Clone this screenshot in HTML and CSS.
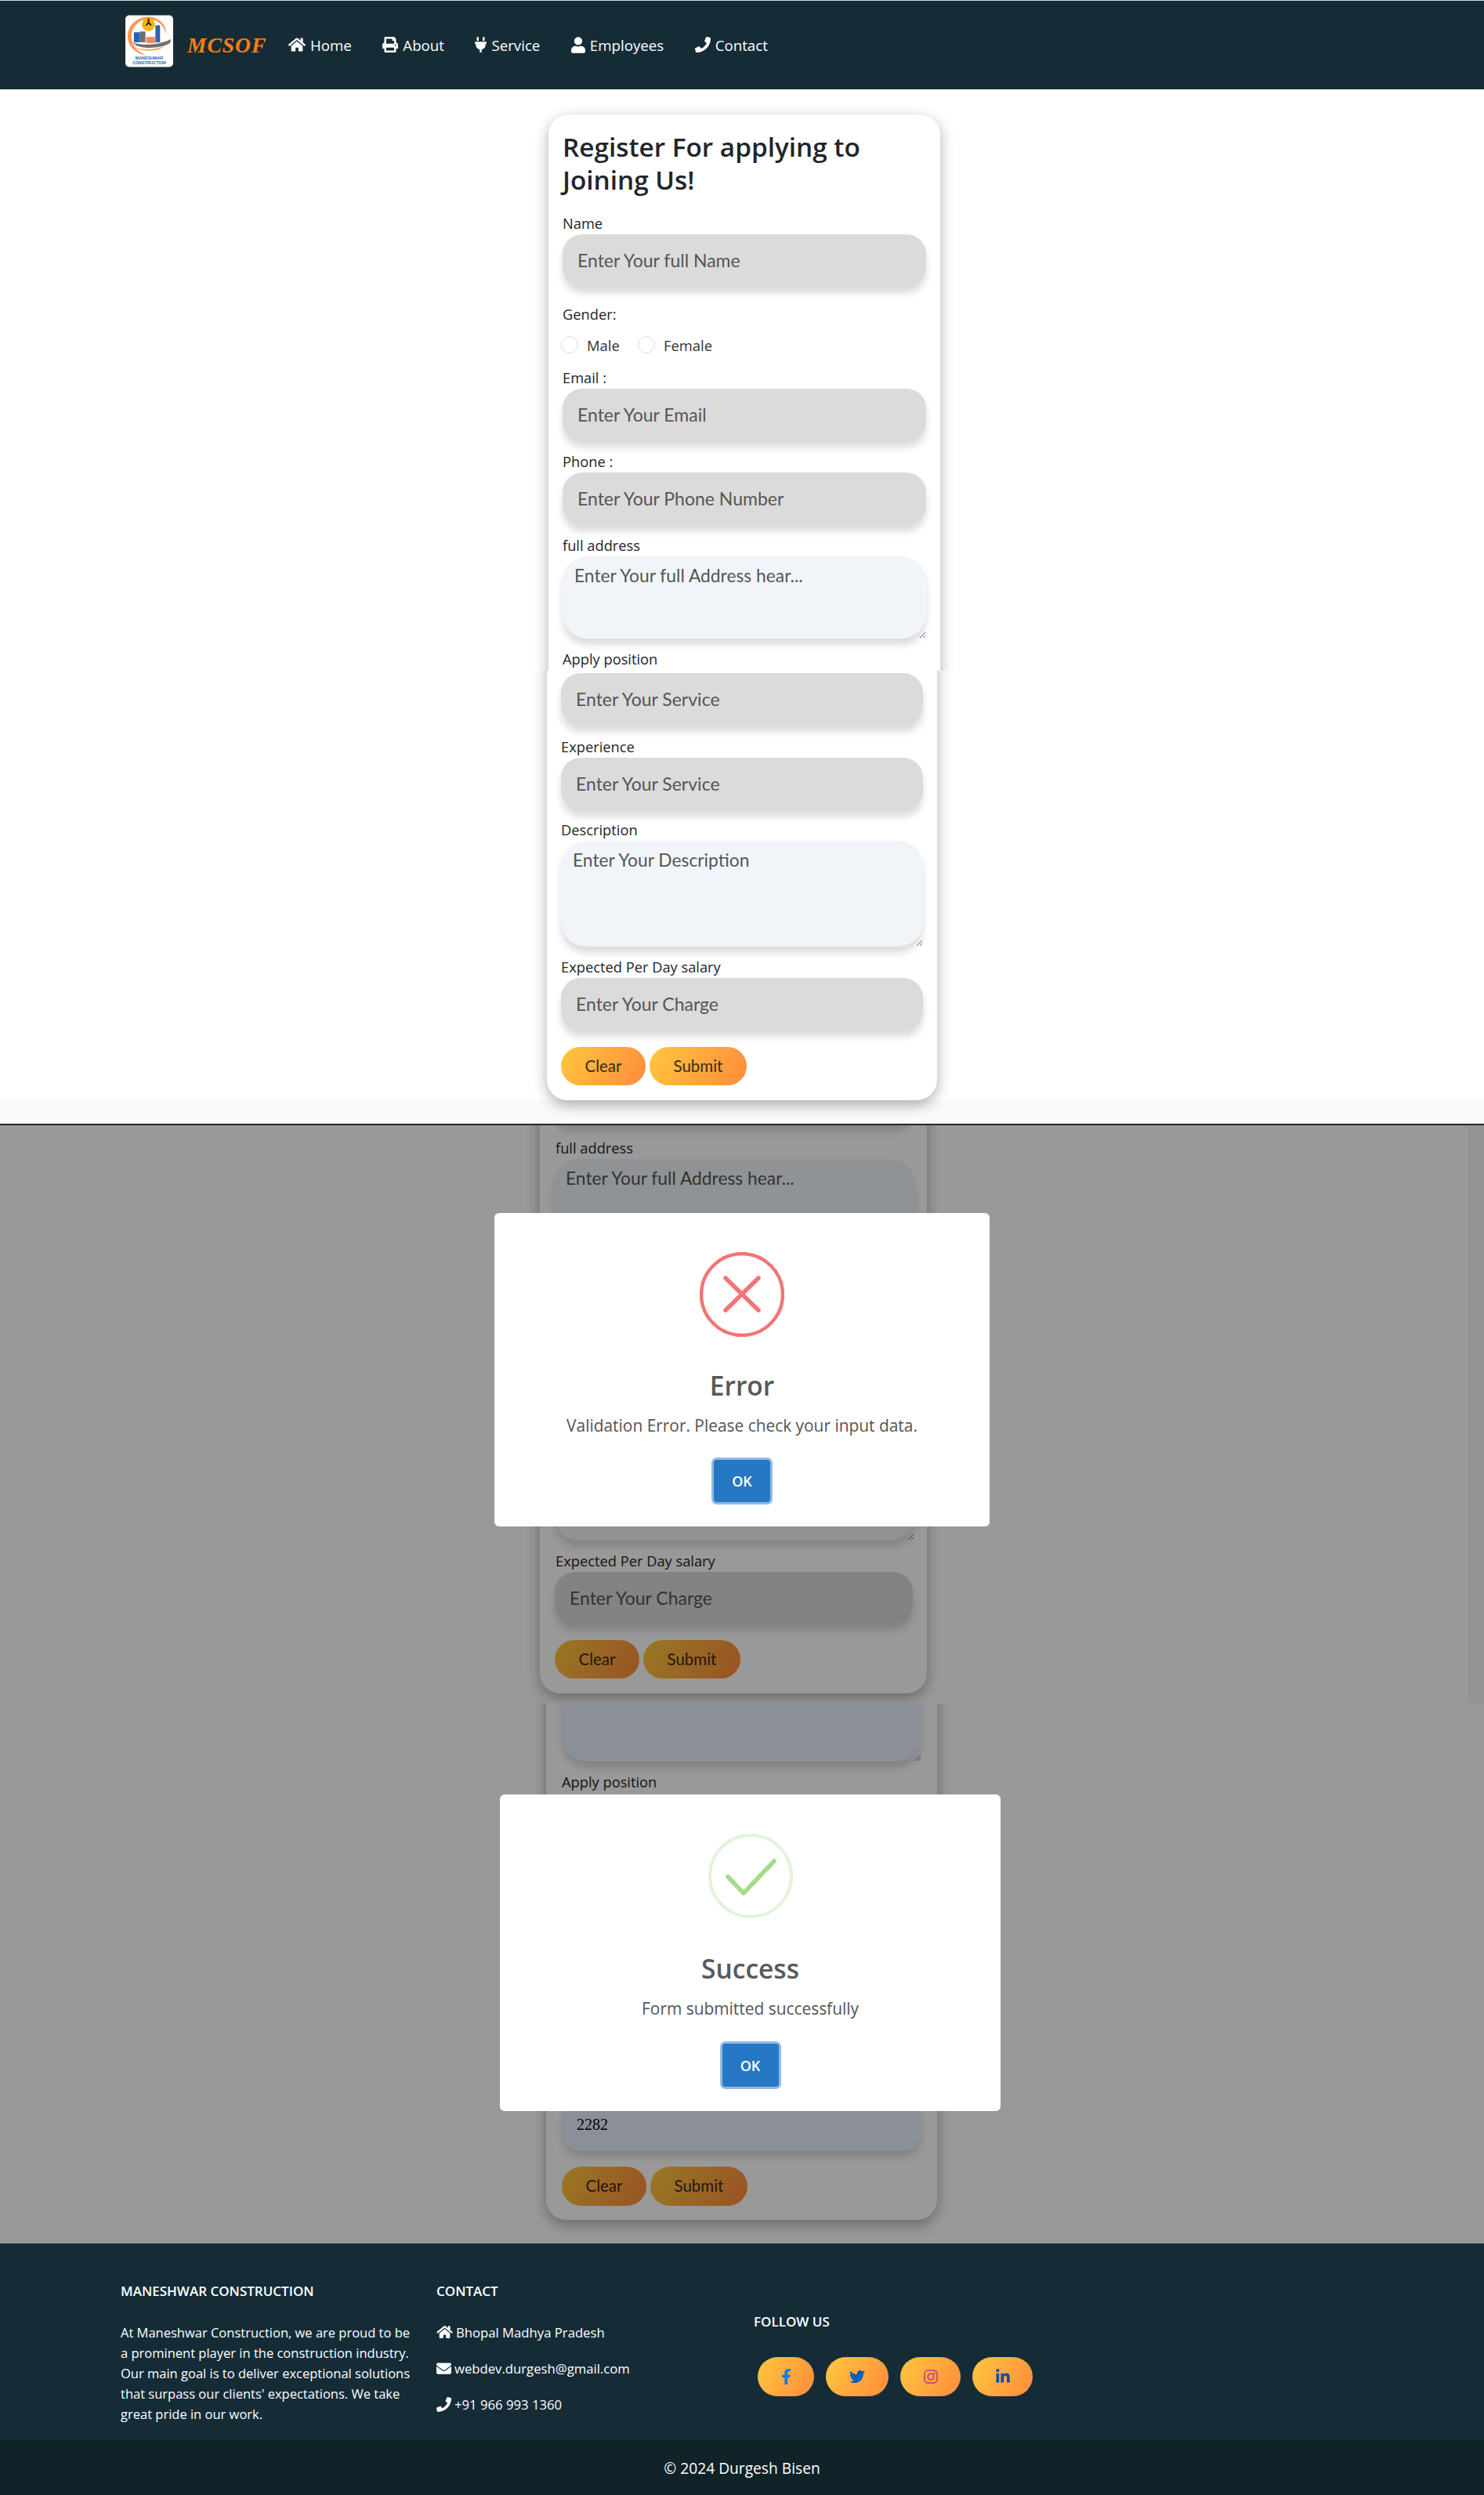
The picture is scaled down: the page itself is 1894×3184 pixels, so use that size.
FILE: index.html
```html
<!DOCTYPE html>
<html lang="en">
<head>
  <meta charset="UTF-8">
  <title>MCSOF - Register</title>
  <link rel="stylesheet" href="styles.css">
</head>
<body>
  <svg class="icon-defs" xmlns="http://www.w3.org/2000/svg">
    <symbol id="i-home" viewBox="0 0 576 512"><path d="M280.37 148.26L96 300.11V464a16 16 0 0 0 16 16l112.06-.29a16 16 0 0 0 15.92-16V368a16 16 0 0 1 16-16h64a16 16 0 0 1 16 16v95.64a16 16 0 0 0 16 16.05L464 480a16 16 0 0 0 16-16V300L295.67 148.26a12.19 12.19 0 0 0-15.3 0zM571.6 251.47L488 182.56V44.05a12 12 0 0 0-12-12h-56a12 12 0 0 0-12 12v72.61L318.47 43a48 48 0 0 0-61 0L4.34 251.47a12 12 0 0 0-1.6 16.9l25.5 31A12 12 0 0 0 45.15 301l235.22-193.74a12.19 12.19 0 0 1 15.3 0L530.9 301a12 12 0 0 0 16.9-1.6l25.5-31a12 12 0 0 0-1.7-16.93z"/></symbol>
    <symbol id="i-print" viewBox="0 0 512 512"><path d="M448 192V77.25c0-8.49-3.37-16.62-9.37-22.63L393.37 9.37c-6-6-14.14-9.37-22.63-9.37H96C78.33 0 64 14.33 64 32v160c-35.35 0-64 28.65-64 64v112c0 8.84 7.16 16 16 16h48v96c0 17.67 14.33 32 32 32h320c17.67 0 32-14.33 32-32v-96h48c8.84 0 16-7.16 16-16V256c0-35.35-28.65-64-64-64zm-64 256H128v-96h256v96zm0-224H128V64h192v48c0 8.84 7.16 16 16 16h48v96zm48 72c-13.25 0-24-10.75-24-24 0-13.26 10.75-24 24-24s24 10.74 24 24c0 13.25-10.75 24-24 24z"/></symbol>
    <symbol id="i-plug" viewBox="0 0 384 512"><path d="M320,32a32,32,0,0,0-64,0v96h64Zm48,128H16A16,16,0,0,0,0,176v32a16,16,0,0,0,16,16H32v32A160.07,160.07,0,0,0,160,412.8V512h64V412.8A160.07,160.07,0,0,0,352,256V224h16a16,16,0,0,0,16-16V176A16,16,0,0,0,368,160ZM128,32a32,32,0,0,0-64,0v96h64Z"/></symbol>
    <symbol id="i-user" viewBox="0 0 448 512"><path d="M224 256c70.7 0 128-57.3 128-128S294.7 0 224 0 96 57.3 96 128s57.3 128 128 128zm89.6 32h-16.7c-22.2 10.2-46.9 16-72.9 16s-50.6-5.8-72.9-16h-16.7C60.2 288 0 348.2 0 422.4V464c0 26.5 21.5 48 48 48h352c26.5 0 48-21.5 48-48v-41.6c0-74.2-60.2-134.4-134.4-134.4z"/></symbol>
    <symbol id="i-phone" viewBox="0 0 512 512"><path d="M493.4 24.6l-104-24c-11.3-2.6-22.9 3.3-27.5 13.9l-48 112c-4.2 9.8-1.4 21.3 6.9 28l60.6 49.6c-36 76.7-98.9 140.5-177.2 177.2l-49.6-60.6c-6.8-8.3-18.2-11.1-28-6.9l-112 48C3.9 366.5-2 378.1.6 389.4l24 104C27.1 504.2 36.7 512 48 512c256.1 0 464-207.5 464-464 0-11.2-7.7-20.9-18.6-23.4z"/></symbol>
    <symbol id="i-mail" viewBox="0 0 512 512"><path d="M502.3 190.8c3.9-3.1 9.7-.2 9.7 4.7V400c0 26.5-21.5 48-48 48H48c-26.5 0-48-21.5-48-48V195.6c0-5 5.7-7.8 9.7-4.7 22.4 17.4 52.1 39.5 154.1 113.6 21.1 15.4 56.7 47.8 92.2 47.6 35.7.3 72-32.8 92.3-47.6 102-74.1 131.6-96.3 154-113.7zM256 320c23.2.4 56.6-29.2 73.4-41.4 132.7-96.3 142.8-104.7 173.4-128.7 5.8-4.5 9.2-11.5 9.2-18.9v-19c0-26.5-21.5-48-48-48H48C21.5 64 0 85.5 0 112v19c0 7.4 3.4 14.3 9.2 18.9 30.6 23.9 40.7 32.4 173.4 128.7 16.8 12.2 50.2 41.8 73.4 41.4z"/></symbol>
  </svg>

  <header class="topbar">
    <svg class="logo" viewBox="0 0 62 67" xmlns="http://www.w3.org/2000/svg">
      <rect width="62" height="67" rx="5" fill="#fff"/>
      <path d="M30 2C15 2 3 13 3 27c0 13 10 23 24 25-9-4-19-11-19-25C8 15 18 5 30 5c12 0 21 9 23 20 1-13-10-23-23-23z" fill="#ff9a4f"/>
      <circle cx="30" cy="12" r="8.5" fill="#f6b40e"/>
      <path d="M29 4h2v5l3 3-1 2-3-3-3 3-1-1 3-4z" fill="#222"/>
      <rect x="11" y="22" width="8" height="13" fill="#2a62b0"/>
      <rect x="19" y="21" width="7" height="14" fill="#6b6f75"/>
      <rect x="39" y="13" width="6" height="22" fill="#2a62b0"/>
      <rect x="27" y="28" width="12" height="8" fill="#f58b5a"/>
      <path d="M9 35c10 4 32 5 50-4l-1 5c-14 8-36 7-44 3z" fill="#6f6f6f"/>
      <path d="M12 41c12 5 28 4 40-2-8 8-30 9-40 2z" fill="#ff9a4f"/>
      <text class="logo-txt" x="31" y="57.500">MANESHWAR</text>
      <text class="logo-txt" x="31" y="64">CONSTRUCTION</text>
    </svg>
    <a class="brand">MCSOF</a>
    <nav class="nav">
      <a class="nav-item"><svg class="ico ico-home"><use href="#i-home"/></svg>Home</a>
      <a class="nav-item"><svg class="ico ico-print"><use href="#i-print"/></svg>About</a>
      <a class="nav-item"><svg class="ico ico-plug"><use href="#i-plug"/></svg>Service</a>
      <a class="nav-item"><svg class="ico ico-user"><use href="#i-user"/></svg>Employees</a>
      <a class="nav-item"><svg class="ico ico-phone"><use href="#i-phone"/></svg>Contact</a>
    </nav>
  </header>

  <!-- first capture, top of the form -->
  <section class="slice slice-a">
    <form class="card card-a">
      <h1 class="form-title">Register For applying to Joining Us!</h1>
      <div class="field field-name">
        <label class="field-label">Name</label>
        <input class="field-input" type="text" placeholder="Enter Your full Name">
      </div>
      <div class="gender">
        <label class="field-label">Gender:</label>
        <div class="radios">
          <input class="radio" type="radio" name="gender"><span class="radio-text">Male</span>
          <input class="radio" type="radio" name="gender"><span class="radio-text">Female</span>
        </div>
      </div>
      <div class="field">
        <label class="field-label">Email :</label>
        <input class="field-input" type="text" placeholder="Enter Your Email">
      </div>
      <div class="field">
        <label class="field-label">Phone :</label>
        <input class="field-input" type="text" placeholder="Enter Your Phone Number">
      </div>
      <div class="field">
        <label class="field-label">full address</label>
        <textarea class="field-area area-address" placeholder="Enter Your full Address hear..."></textarea>
      </div>
      <div class="field">
        <label class="field-label">Apply position</label>
      </div>
    </form>
  </section>

  <!-- rest of the form, scrolled a little -->
  <section class="slice slice-b">
    <form class="card card-b">
      <div class="field">
        <input class="field-input" type="text" placeholder="Enter Your Service">
      </div>
      <div class="field">
        <label class="field-label">Experience</label>
        <input class="field-input" type="text" placeholder="Enter Your Service">
      </div>
      <div class="field">
        <label class="field-label">Description</label>
        <textarea class="field-area area-desc" placeholder="Enter Your Description"></textarea>
      </div>
      <div class="field field-last">
        <label class="field-label">Expected Per Day salary</label>
        <input class="field-input" type="text" placeholder="Enter Your Charge">
      </div>
      <div class="btn-row">
        <button class="grad-btn btn-clear" type="button">Clear</button>
        <button class="grad-btn btn-submit" type="button">Submit</button>
      </div>
    </form>
  </section>

  <!-- validation error dialog -->
  <section class="slice slice-c">
    <form class="card card-c">
      <input class="field-input stub-input" type="text">
      <div class="field">
        <label class="field-label">full address</label>
        <textarea class="field-area area-address" placeholder="Enter Your full Address hear..."></textarea>
      </div>
      <textarea class="field-area area-desc area-behind"></textarea>
      <div class="field field-last field-exp">
        <label class="field-label">Expected Per Day salary</label>
        <input class="field-input" type="text" placeholder="Enter Your Charge">
      </div>
      <div class="btn-row">
        <button class="grad-btn btn-clear" type="button">Clear</button>
        <button class="grad-btn btn-submit" type="button">Submit</button>
      </div>
    </form>
    <div class="dim dim-error">
      <div class="modal modal-error">
        <svg class="modal-icon" viewBox="0 0 108 108" xmlns="http://www.w3.org/2000/svg">
          <circle cx="54" cy="54" r="52" fill="none" stroke="#f27474" stroke-width="4.5"/>
          <path d="M33 33l42 41M75 33L33 74" fill="none" stroke="#f27474" stroke-width="5.5" stroke-linecap="round"/>
        </svg>
        <h2 class="modal-title">Error</h2>
        <p class="modal-text">Validation Error. Please check your input data.</p>
        <button class="modal-ok" type="button">OK</button>
      </div>
    </div>
  </section>

  <!-- success dialog -->
  <section class="slice slice-d">
    <form class="card card-d">
      <textarea class="field-area field-filled area-stub"></textarea>
      <div class="field">
        <label class="field-label">Apply position</label>
      </div>
      <div class="field field-last">
        <input class="field-input field-filled input-salary" type="text" value="2282">
      </div>
      <div class="btn-row">
        <button class="grad-btn btn-clear" type="button">Clear</button>
        <button class="grad-btn btn-submit" type="button">Submit</button>
      </div>
    </form>
    <div class="dim">
      <div class="modal modal-success">
        <svg class="modal-icon" viewBox="0 0 108 108" xmlns="http://www.w3.org/2000/svg">
          <circle cx="54" cy="54" r="52" fill="none" stroke="#e4f3dc" stroke-width="4.5"/>
          <path d="M25 55l20 21 39-41" fill="none" stroke="#a5dc86" stroke-width="5.5" stroke-linecap="round" stroke-linejoin="round"/>
        </svg>
        <h2 class="modal-title">Success</h2>
        <p class="modal-text">Form submitted successfully</p>
        <button class="modal-ok" type="button">OK</button>
      </div>
    </div>
  </section>

  <footer class="site-footer">
    <div class="foot-cols">
      <div class="foot-col">
        <h3 class="foot-head">MANESHWAR CONSTRUCTION</h3>
        <p class="foot-about">At Maneshwar Construction, we are proud to be a prominent player in the construction industry. Our main goal is to deliver exceptional solutions that surpass our clients' expectations. We take great pride in our work.</p>
      </div>
      <div class="foot-col">
        <h3 class="foot-head">CONTACT</h3>
        <p class="foot-line"><svg class="ico ico-foot-home"><use href="#i-home"/></svg>Bhopal Madhya Pradesh</p>
        <p class="foot-line"><svg class="ico ico-foot-mail"><use href="#i-mail"/></svg>webdev.durgesh@gmail.com</p>
        <p class="foot-line"><svg class="ico ico-foot-phone"><use href="#i-phone"/></svg>+91 966 993 1360</p>
      </div>
      <div class="foot-col foot-follow">
        <h3 class="foot-head">FOLLOW US</h3>
        <div class="socials">
          <a class="social social-fb">
            <svg viewBox="0 0 320 512" fill="#1877f2" xmlns="http://www.w3.org/2000/svg"><path d="M279.14 288l14.22-92.66h-88.91v-60.13c0-25.35 12.42-50.06 52.24-50.06h40.42V6.26S260.43 0 225.36 0c-73.22 0-121.08 44.38-121.08 124.72v70.62H22.89V288h81.39v224h100.17V288z"/></svg>
          </a>
          <a class="social social-tw">
            <svg viewBox="0 0 512 512" fill="#0d5fb5" xmlns="http://www.w3.org/2000/svg"><path d="M459.37 151.716c.325 4.548.325 9.097.325 13.645 0 138.72-105.583 298.558-298.558 298.558-59.452 0-114.68-17.219-161.137-47.106 8.447.974 16.568 1.299 25.34 1.299 49.055 0 94.213-16.568 130.274-44.832-46.132-.975-84.792-31.188-98.112-72.772 6.498.974 12.995 1.624 19.818 1.624 9.421 0 18.843-1.3 27.614-3.573-48.081-9.747-84.143-51.98-84.143-102.985v-1.299c13.969 7.797 30.214 12.67 47.431 13.319-28.264-18.843-46.781-51.005-46.781-87.391 0-19.492 5.197-37.36 14.294-52.954 51.655 63.675 129.3 105.258 216.365 109.807-1.624-7.797-2.599-15.918-2.599-24.04 0-57.828 46.782-104.934 104.934-104.934 30.213 0 57.502 12.67 76.67 33.137 23.715-4.548 46.456-13.32 66.599-25.34-7.798 24.366-24.366 44.833-46.132 57.827 21.117-2.273 41.584-8.122 60.426-16.243-14.292 20.791-32.161 39.308-52.628 54.253z"/></svg>
          </a>
          <a class="social social-ig">
            <svg viewBox="0 0 18 18" fill="none" stroke="#c13584" stroke-width="1.500" xmlns="http://www.w3.org/2000/svg"><rect x="1" y="1" width="16" height="16" rx="4"/><circle cx="9" cy="9" r="3.800"/><circle cx="13.600" cy="4.400" r=".5" fill="#c13584"/></svg>
          </a>
          <a class="social social-in">
            <svg viewBox="0 0 448 512" fill="#0a4da6" xmlns="http://www.w3.org/2000/svg"><path d="M100.28 448H7.4V148.9h92.88zM53.79 108.1C24.09 108.1 0 83.5 0 53.8a53.79 53.79 0 0 1 107.58 0c0 29.7-24.1 54.3-53.79 54.3zM447.9 448h-92.68V302.4c0-34.7-.7-79.2-48.29-79.2-48.29 0-55.69 37.7-55.69 76.7V448h-92.78V148.9h89.08v40.8h1.3c12.4-23.5 42.69-48.3 87.88-48.3 94 0 111.28 61.9 111.28 142.3V448z"/></svg>
          </a>
        </div>
      </div>
    </div>
    <div class="foot-copy">© 2024 Durgesh Bisen</div>
  </footer>
</body>
</html>
```

FILE: styles.css
```css
* {
  box-sizing: border-box;
}
body {
  margin: 0;
  background: #fff;
  color: #212529;
  font-family: 'Open Sans', 'Noto Sans', sans-serif;
}
.icon-defs {
  display: none;
}
.ico {
  fill: currentColor;
  flex: none;
}

/* top bar */
.topbar {
  height: 114px;
  background: #152c37;
  border-top: 1px solid #d9dcdd;
  padding: 18px 0 0 160px;
  display: flex;
  align-items: flex-start;
}
.logo {
  width: 61px;
  height: 67px;
  flex: none;
}
.logo-txt {
  font-family: 'Liberation Sans', sans-serif;
  font-size: 5.4px;
  font-weight: 700;
  fill: #2a5fa8;
  text-anchor: middle;
}
.brand {
  margin: 22px 0 0 18px;
  width: 98px;
  font-family: 'Liberation Serif', serif;
  font-weight: 700;
  font-style: italic;
  font-size: 27.5px;
  line-height: 34px;
  letter-spacing: 1px;
  color: #ff7f11;
  white-space: nowrap;
}
.nav {
  display: flex;
  gap: 39.500px;
  margin: 25px 0 0 31px;
}
.nav-item {
  display: flex;
  align-items: center;
  height: 26px;
  gap: 6px;
  color: #fff;
  font-size: 18.7px;
}
.ico-home { width: 22px; height: 20px; }
.ico-print { width: 20px; height: 20px; }
.ico-plug { width: 15px; height: 20px; }
.ico-user { width: 18px; height: 21px; }
.ico-phone { width: 20px; height: 20px; }

/* stitched captures */
.slice {
  position: relative;
  overflow: hidden;
}
.slice-a {
  height: 742px;
  padding: 32px 0 0 700px;
}
.slice-b {
  height: 580px;
  padding-left: 698px;
  border-bottom: 2px solid #152c37;
  background: linear-gradient(#fff 548px, #fbf9fa 548px);
}
.slice-c {
  height: 738px;
  padding-left: 689px;
}
.slice-d {
  height: 689px;
  padding-left: 697px;
}

/* form card */
.card {
  background: #fff;
  border-radius: 26px;
  box-shadow: 0 6px 18px rgba(0, 0, 0, 0.32);
}
.card-a {
  width: 500px;
  height: 800px;
  padding: 20px 18px;
}
.card-b {
  width: 498px;
  margin-top: -40px;
  padding: 43px 18px 19px;
}
.card-b .field:first-child {
  margin-bottom: 15px;
}
.card-b .field:nth-child(2) {
  margin-bottom: 13px;
}
.card-c {
  width: 494px;
  margin-top: -40px;
  padding: 0 18px 19px 19px;
}
.card-d {
  width: 499px;
  margin-top: -40px;
  padding: 0 20px 18px;
}
.form-title {
  margin: 0 0 23px;
  font-size: 33.3px;
  font-weight: 600;
  line-height: 42px;
}
.field {
  margin-bottom: 14px;
}
.field-name {
  margin-bottom: 23px;
}
.field-last {
  margin-bottom: 21px;
}
.field-label {
  display: block;
  height: 24px;
  margin-bottom: 2px;
  font-size: 18.3px;
  line-height: 24px;
}
.field-input,
.field-area {
  display: block;
  width: 100%;
  border: none;
  outline: none;
  font-family: Lato, sans-serif;
  font-size: 23px;
  box-shadow: 0 8px 10px rgba(0, 0, 0, 0.14);
}
.field-input {
  height: 67px;
  padding: 0 19px 2px;
  border-radius: 25px;
  background: #dbdbdb;
}
.field-area {
  padding: 10px 15px;
  font-size: 22.8px;
  border-radius: 32px;
  background: #f1f5f9;
}
.field-input::placeholder,
.field-area::placeholder {
  color: #555;
  opacity: 1;
}
.area-address { height: 105px; }
.area-desc { height: 135px; }
.gender {
  margin-bottom: 18px;
}
.radios {
  display: flex;
  align-items: center;
  height: 24px;
  margin-top: 15px;
  margin-left: -2px;
}
.radio {
  appearance: none;
  width: 22px;
  height: 22px;
  margin: 0 11px 0 0;
  border: 1px solid #dcdcdc;
  border-radius: 50%;
  background: #fff;
}
.radio-text {
  width: 65px;
  font-size: 18.4px;
  color: #333;
}
.btn-row {
  display: flex;
  gap: 5px;
}
.grad-btn {
  height: 49px;
  padding: 0 0 2px;
  border: none;
  border-radius: 25px;
  background: linear-gradient(120deg, #ffc83d, #ff8a3d);
  font-family: Lato, sans-serif;
  font-size: 20.5px;
  color: #3a2a12;
}
.btn-clear { width: 108px; }
.btn-submit { width: 124px; }

/* captures behind the dialogs */
.stub-input {
  height: 40px;
  width: 457px;
}
.card-c .field {
  margin-top: 17px;
}
.card-c .field-label {
  margin-left: 1px;
}
.card-c .field-area {
  width: 460px;
  margin-left: -1px;
}
.card-c .area-behind {
  margin-top: 247px;
}
.card-c .field-exp {
  margin-top: 14px;
}
.card-c .field-input {
  width: 457px;
}
.card-c .field-last,
.card-d .field-last {
  margin-bottom: 20px;
}
.field-filled {
  background: #e8f0fe;
}
.area-stub {
  height: 114px;
  border-radius: 0 0 32px 32px;
}
.card-d .field {
  margin-top: 14px;
}
.input-salary {
  margin-top: 392px;
  padding-bottom: 0;
  font-family: 'Liberation Serif', serif;
  font-size: 20px;
  color: #000;
}
.card-d .field-last {
  margin-top: 0;
}
.card-d .grad-btn {
  height: 50px;
}

/* dialogs */
.dim {
  position: absolute;
  inset: 0;
  background: rgba(0, 0, 0, 0.4);
}
.dim-error::after {
  content: "";
  position: absolute;
  top: 0;
  right: 0;
  bottom: 0;
  width: 21px;
  background: rgba(0, 0, 0, 0.03);
}
.modal {
  display: flex;
  flex-direction: column;
  align-items: center;
  background: #fff;
  border-radius: 6px;
  padding: 50px 0 31px;
}
.modal-error {
  width: 632px;
  height: 400px;
  margin: 112px 0 0 631px;
}
.modal-success {
  width: 639px;
  height: 404px;
  margin: 116px 0 0 638px;
}
.modal-icon {
  width: 108px;
  height: 108px;
  flex: none;
}
.modal-title {
  margin: 42px 0 0;
  font-size: 33.5px;
  font-weight: 600;
  line-height: 40px;
  color: #595959;
}
.modal-success .modal-title {
  margin-top: 44px;
}
.modal-text {
  margin: 16px 0 0;
  font-size: 20.9px;
  line-height: 30px;
  color: #545454;
}
.modal-ok {
  width: 72px;
  height: 54px;
  margin-top: 29px;
  border: none;
  border-radius: 4px;
  background: #2778c4;
  box-shadow: 0 0 0 3px rgba(39, 120, 196, 0.5);
  color: #fff;
  font-family: 'Open Sans', sans-serif;
  font-size: 18px;
  font-weight: 600;
}
.modal-success .modal-ok {
  height: 55px;
  margin-top: 30px;
}

/* footer */
.site-footer {
  background: #152c37;
  color: #fff;
}
.foot-cols {
  display: grid;
  grid-template-columns: 403px 405px 1fr;
  height: 251px;
  padding: 49px 0 0 154px;
}
.foot-head {
  margin: 0;
  font-size: 17px;
  font-weight: 600;
  line-height: 24px;
}
.foot-about {
  width: 376px;
  margin: 28px 0 0;
  font-size: 16.5px;
  line-height: 26px;
}
.foot-line {
  display: flex;
  align-items: center;
  gap: 4px;
  height: 26px;
  margin: 0 0 20px;
  font-size: 16.7px;
}
.foot-head + .foot-line {
  margin-top: 27px;
}
.ico-foot-home { width: 21px; height: 18px; }
.ico-foot-mail { width: 19px; height: 19px; }
.ico-foot-phone { width: 19px; height: 19px; }
.foot-follow {
  padding-top: 39px;
}
.socials {
  display: flex;
  gap: 15px;
  margin: 33px 0 0 5px;
}
.social {
  display: flex;
  align-items: center;
  justify-content: center;
  height: 50px;
  border-radius: 25px;
  background: linear-gradient(120deg, #ffc83d, #ff8a3d);
}
.social-fb { width: 72px; }
.social-tw { width: 80px; }
.social-ig { width: 77px; }
.social-in { width: 77px; }
.social-fb svg { width: 13px; height: 20px; }
.social-tw svg { width: 20px; height: 20px; }
.social-ig svg { width: 18px; height: 18px; }
.social-in svg { width: 18px; height: 20px; }
.foot-copy {
  height: 70px;
  background: #0f2329;
  text-align: center;
  font-size: 19.2px;
  line-height: 72px;
}
```
